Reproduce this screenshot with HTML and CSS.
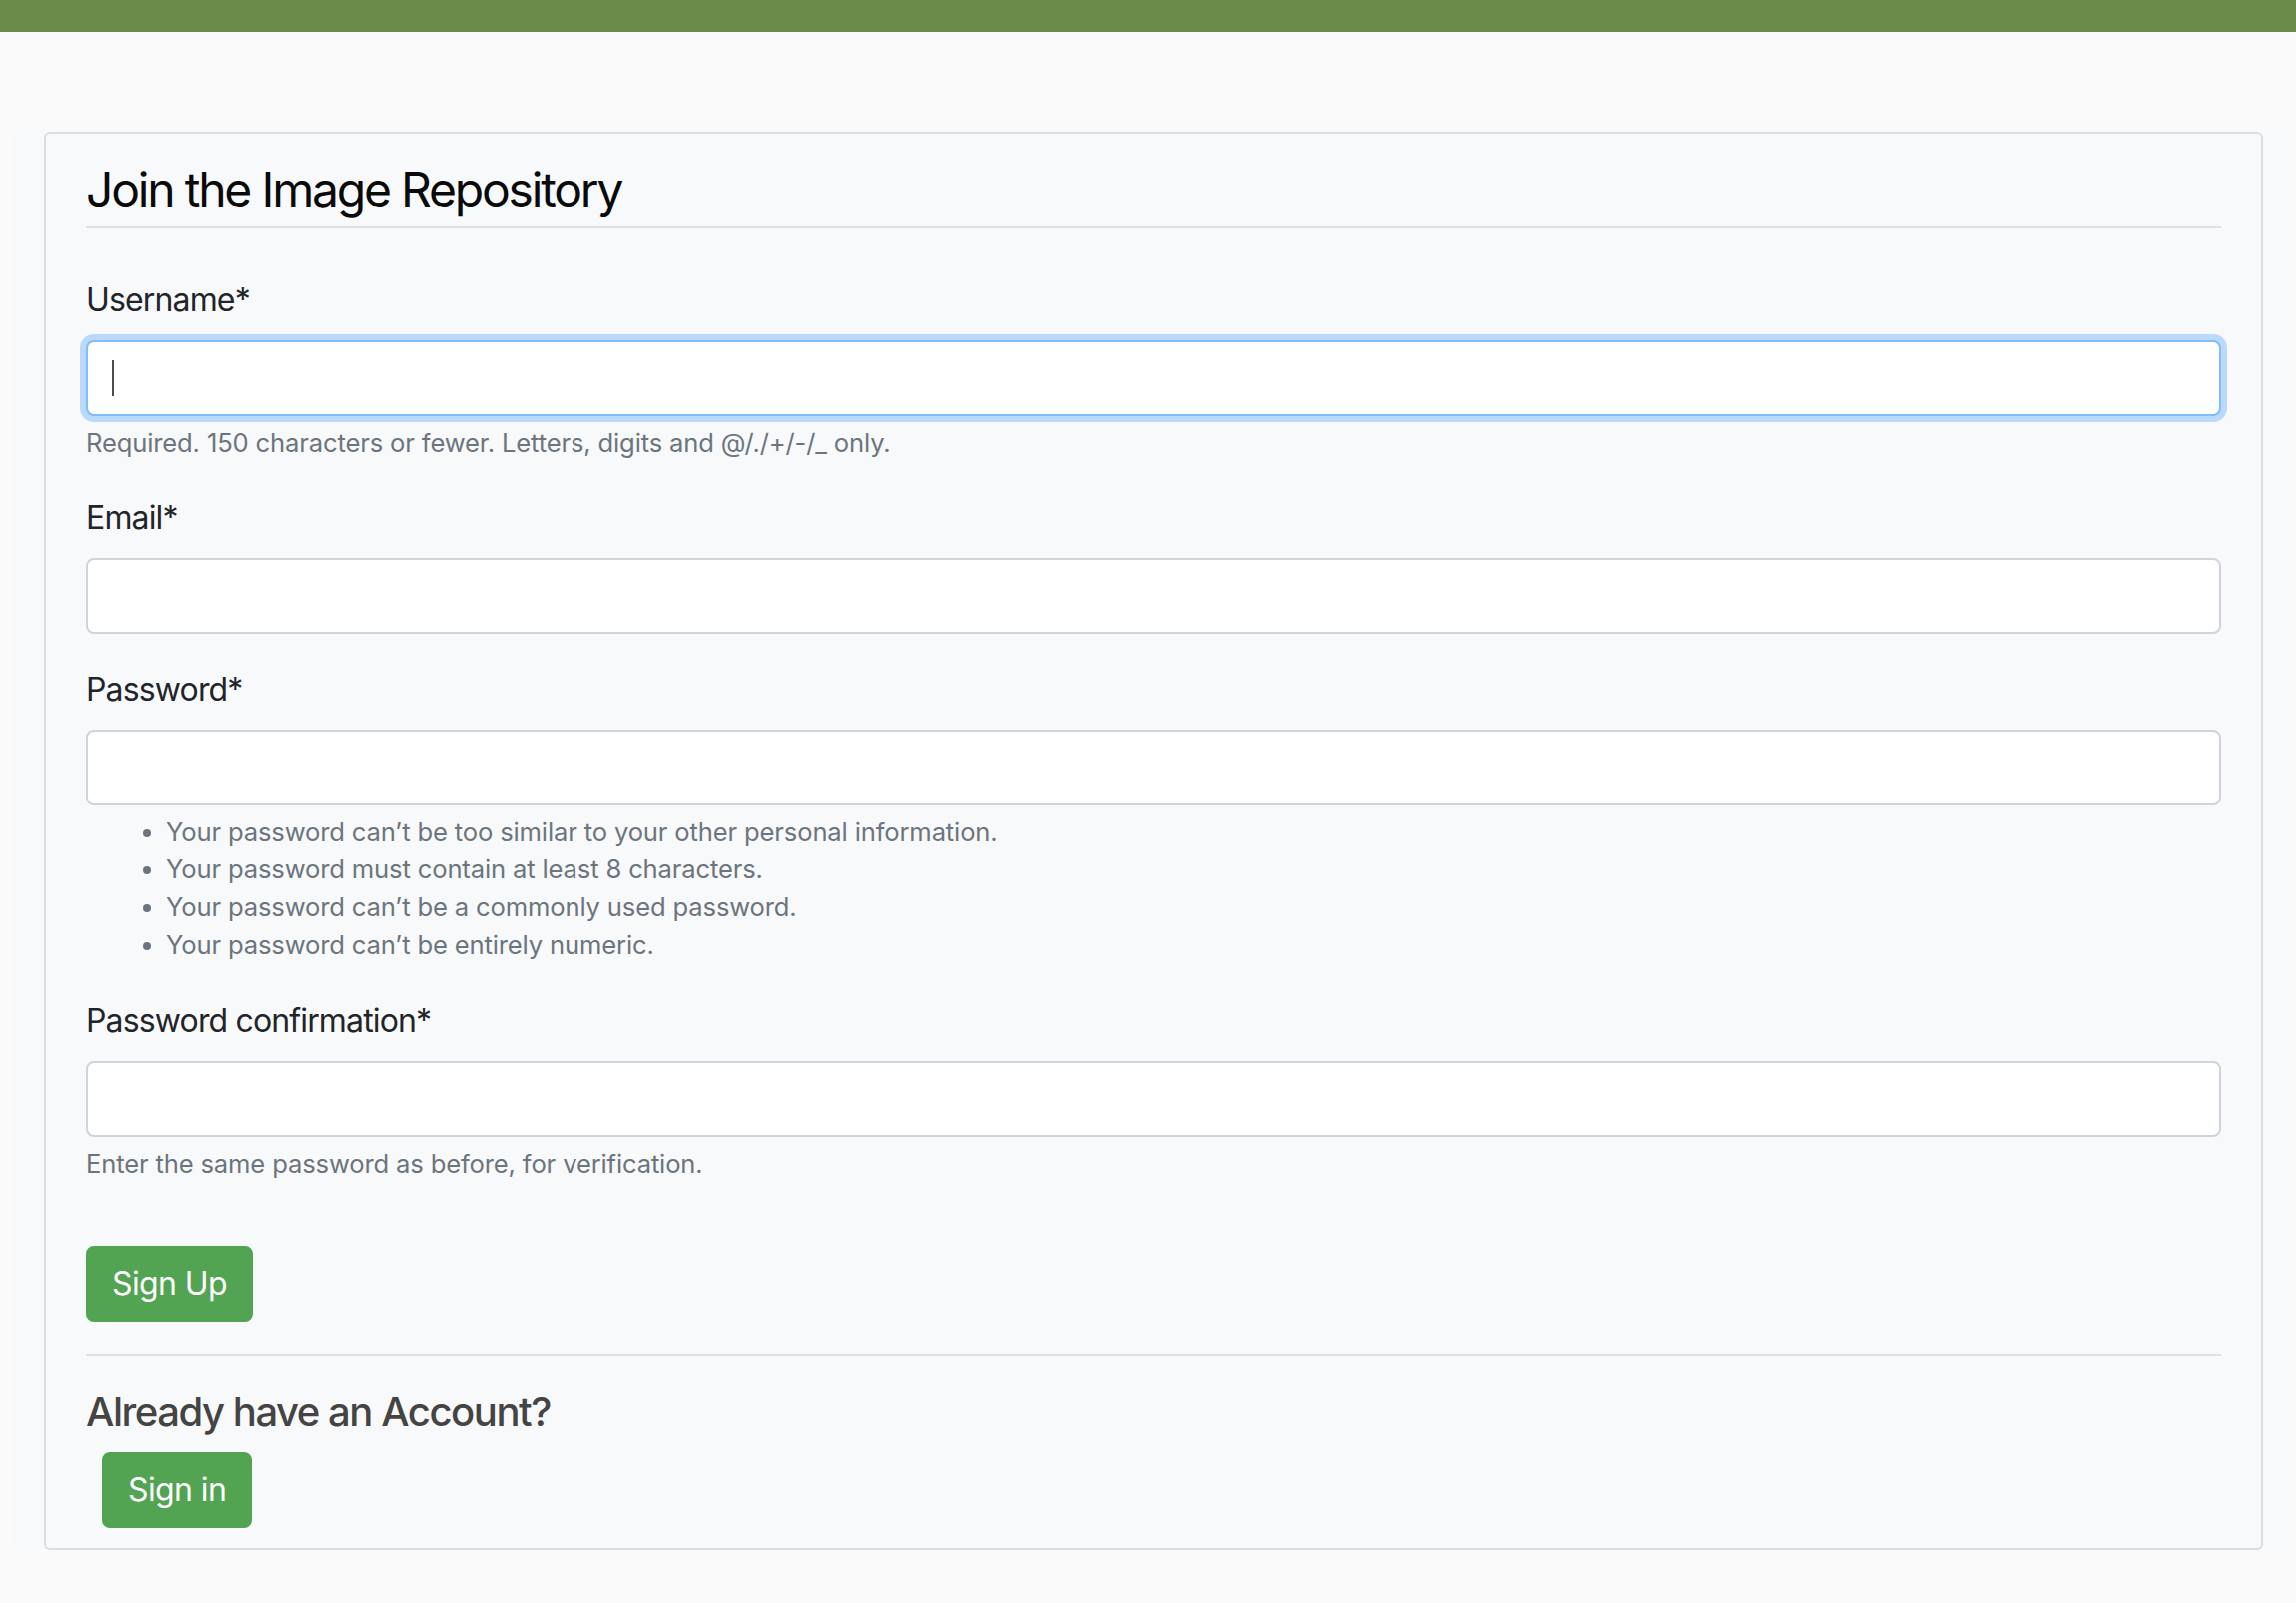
FILE: index.html
```html
<!DOCTYPE html>
<html lang="en">
<head>
<meta charset="utf-8">
<title>Join the Image Repository</title>
<link rel="stylesheet" href="styles.css">
</head>
<body>
<header class="topbar"></header>
<main class="page">
  <div class="wrap">
    <section class="card">
      <form class="signup">
        <fieldset class="fields">
          <legend class="legend">Join the Image Repository</legend>
          <div class="group">
            <label class="label" for="id_username">Username*</label>
            <div class="field-wrap">
              <input class="control is-focused" type="text" id="id_username">
              <span class="caret"></span>
            </div>
            <small class="help">Required. 150 characters or fewer. Letters, digits and @/./+/-/_ only.</small>
          </div>
          <div class="group">
            <label class="label" for="id_email">Email*</label>
            <input class="control" type="email" id="id_email">
          </div>
          <div class="group">
            <label class="label" for="id_password1">Password*</label>
            <input class="control" type="password" id="id_password1">
            <small class="help">
              <ul class="rules">
                <li>Your password can’t be too similar to your other personal information.</li>
                <li>Your password must contain at least 8 characters.</li>
                <li>Your password can’t be a commonly used password.</li>
                <li>Your password can’t be entirely numeric.</li>
              </ul>
            </small>
          </div>
          <div class="group">
            <label class="label" for="id_password2">Password confirmation*</label>
            <input class="control" type="password" id="id_password2">
            <small class="help">Enter the same password as before, for verification.</small>
          </div>
        </fieldset>
        <div class="group">
          <button class="btn" type="submit">Sign Up</button>
        </div>
      </form>
      <div class="already">
        <h5 class="already-title">Already have an Account?</h5>
        <a class="btn btn-indent" href="#">Sign in</a>
      </div>
    </section>
  </div>
</main>
</body>
</html>
```

FILE: styles.css
```css
* { box-sizing: border-box; }

html, body {
  margin: 0;
  padding: 0;
}

body {
  background: #fafafa;
  color: #212529;
  font-family: "Inter", "Liberation Sans", sans-serif;
  font-size: 32px;
  line-height: 1.5;
}

.topbar {
  height: 32px;
  background: #6a8c48;
}

.page {
  padding-top: 98px;
}

.wrap {
  margin: 0 8px 0 13px;
  padding: 2px 25px 0 31px;
  background: #f8f9fa;
}

.card {
  background: #f8f9fa;
  border: 2px solid #dcdde0;
  border-radius: 6px;
  padding: 20px 40px;
}

.fields {
  border: 0;
  margin: 0 0 32px;
  padding: 0;
  min-width: 0;
}

.legend {
  display: block;
  width: 100%;
  padding: 0;
  margin-bottom: 48px;
  font-size: 48px;
  line-height: 72px;
  letter-spacing: -2.2px;
  color: #0a0a0a;
  border-bottom: 2px solid #e0e1e6;
}

.group {
  margin-bottom: 32px;
}

.label {
  display: inline-block;
  margin-bottom: 16px;
  color: #212529;
  letter-spacing: -0.85px;
}

.field-wrap {
  position: relative;
}

.control {
  display: block;
  width: 100%;
  height: 76px;
  padding: 12px 24px;
  font: inherit;
  color: #495057;
  background: #fff;
  border: 2px solid #ced4da;
  border-radius: 8px;
  outline: none;
}

.control.is-focused {
  border-color: #80bdff;
  box-shadow: 0 0 0 6px rgba(0, 123, 255, 0.25);
}

.caret {
  position: absolute;
  left: 26px;
  top: 20px;
  width: 2px;
  height: 36px;
  background: #4a4a50;
}

.help {
  display: block;
  margin-top: 8px;
  font-size: 25.6px;
  line-height: 37.7px;
  letter-spacing: -0.15px;
  color: #6c757d;
}

.rules {
  margin: 0 0 33px;
  padding-left: 80px;
}

.btn {
  display: inline-block;
  padding: 12px 24px;
  font: inherit;
  line-height: 48px;
  letter-spacing: -0.6px;
  color: #fff;
  background: #52a453;
  border: 2px solid #52a453;
  border-radius: 8px;
  text-decoration: none;
  cursor: pointer;
}

.already {
  border-top: 2px solid #dee2e6;
  padding-top: 32px;
}

.already-title {
  margin: 0 0 16px;
  font-size: 40px;
  line-height: 48px;
  font-weight: 500;
  letter-spacing: -1.45px;
  color: #444444;
}

.btn-indent {
  margin-left: 16px;
}
```
